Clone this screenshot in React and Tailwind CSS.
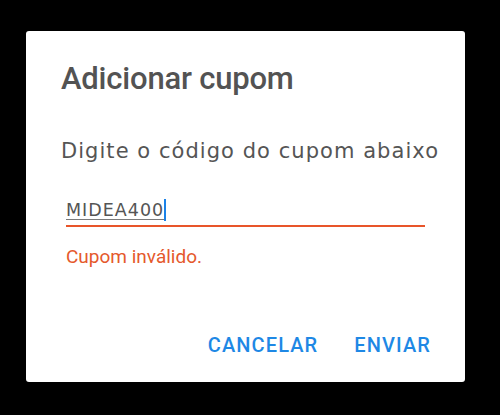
export default function App() {
  return (
    <div className="w-[500px] h-[415px] bg-black pt-[31px] pl-[26px]">
      <div className="w-[439px] h-[351px] bg-white rounded-[3px] flex flex-col">
        <div className="pt-[30px] pl-[35px] text-[31px] leading-[36px] font-medium tracking-[-0.2px] text-[#535353] font-['Roboto',sans-serif]">
          Adicionar cupom
        </div>
        <div className="mt-[42px] pl-[35px] text-[21px] leading-[24px] tracking-[1.05px] text-[#555555] font-['DejaVu_Sans',sans-serif]">
          Digite o código do cupom abaixo
        </div>
        <div className="mt-[35px] px-[40px]">
          <div className="flex items-center h-[24px]">
            <span className="text-[17.5px] leading-[24px] tracking-[1px] text-[#555555] underline decoration-[#7a7a7a] underline-offset-[3px] font-['DejaVu_Sans',sans-serif]">
              MIDEA400
            </span>
            <span className="w-[2px] h-[22px] bg-[#1a82e8]" />
          </div>
          <div className="mt-[3px] h-[2px] bg-[#e8552a]" />
          <div className="mt-[18px] text-[19px] leading-[24px] text-[#e5592c] font-['Roboto',sans-serif]">
            Cupom inválido.
          </div>
        </div>
        <div className="mt-[64px] flex justify-end pr-[34px] gap-[36px] text-[20px] leading-[24px] font-medium tracking-[1.1px] text-[#1e88e5] font-['Roboto',sans-serif]">
          <span>CANCELAR</span>
          <span>ENVIAR</span>
        </div>
      </div>
    </div>
  );
}
